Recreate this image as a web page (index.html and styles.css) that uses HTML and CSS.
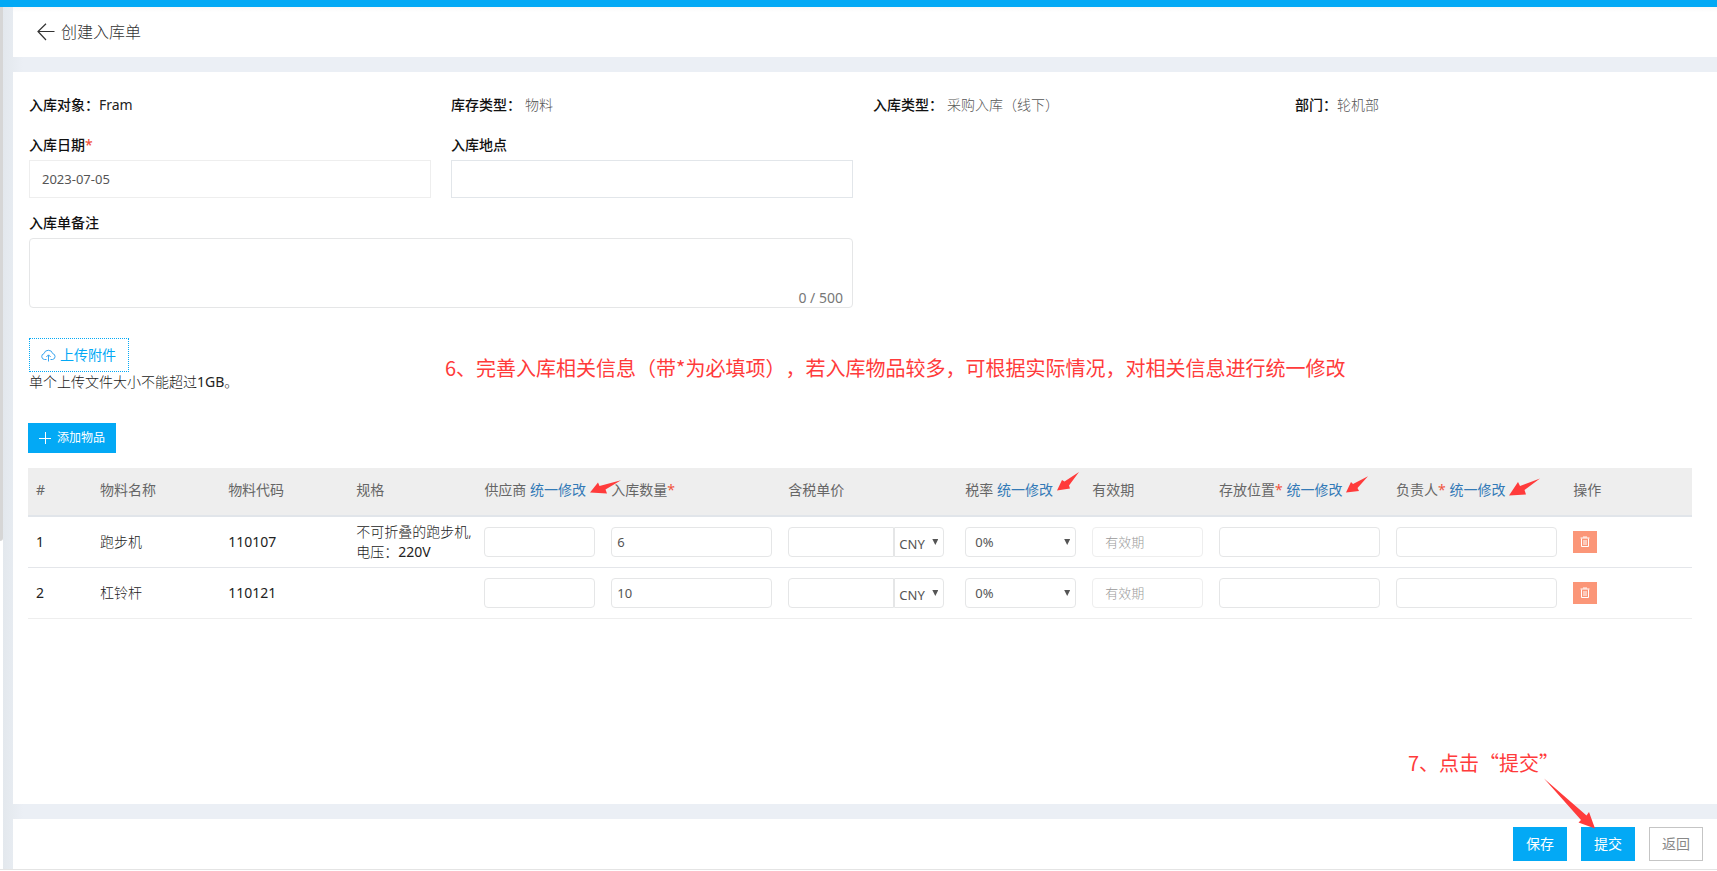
FILE: index.html
```html
<!DOCTYPE html>
<html lang="zh-CN">
<head>
<meta charset="utf-8">
<title>创建入库单</title>
<link rel="stylesheet" href="styles.css">
</head>
<body>
<div class="topbar"></div>
<div class="shell">
  <div class="rail"><div class="rail-thumb"></div></div>
  <main class="page">
    <header class="page-head">
      <a class="back" href="#" aria-label="返回上一页"><svg width="18" height="18" viewBox="0 0 18 18" fill="none" stroke="#333" stroke-width="1.2"><path d="M17.5 8.500H1M9 .8L1 8.500L9 17"/></svg></a>
      <h1 class="page-title">创建入库单</h1>
    </header>

    <section class="card">
      <form class="form">
        <div class="fact"><b>入库对象：</b><span class="latin">Fram</span></div>
        <div class="fact"><b>库存类型：</b><span class="muted spaced">物料</span></div>
        <div class="fact"><b>入库类型：</b><span class="muted spaced">采购入库（线下）</span></div>
        <div class="fact"><b>部门：</b><span class="muted">轮机部</span></div>
        <div class="field first-col">
          <label for="date">入库日期<i class="req">*</i></label>
          <input id="date" class="box pale" type="text" value="2023-07-05">
        </div>
        <div class="field">
          <label for="place">入库地点</label>
          <input id="place" class="box" type="text">
        </div>
        <div class="field remark">
          <label for="remark">入库单备注</label>
          <div class="area-wrap"><textarea id="remark" class="area"></textarea><span class="count">0 / 500</span></div>
        </div>
      </form>

      <div class="upload">
        <button type="button" class="upload-btn"><svg width="15" height="13" viewBox="0 0 15 13" fill="none" stroke="#3aa5ef" stroke-width="1"><path d="M5.500 10.500H3.500A3 3 0 0 1 3 4.600A4.500 4.500 0 0 1 11.700 4.600A3 3 0 0 1 11.500 10.500H9.500M7.500 12.500V6M5.300 8L7.500 5.800L9.700 8"/></svg>上传附件</button>
        <p class="hint">单个上传文件大小不能超过<span class="latin">1GB</span>。</p>
      </div>

      <button type="button" class="add-btn"><svg width="12" height="12" viewBox="0 0 12 12" stroke="#fff" fill="none"><path d="M6.500 0V12M0 6.500H12"/></svg>添加物品</button>

      <table class="items">
        <colgroup><col class="c-no"><col class="c-m"><col class="c-m"><col class="c-m"><col class="c-s"><col class="c-l"><col class="c-l"><col class="c-s"><col class="c-s"><col class="c-l"><col class="c-l"><col class="c-s"></colgroup>
        <thead>
          <tr>
            <th>#</th><th>物料名称</th><th>物料代码</th><th>规格</th>
            <th>供应商 <a class="bulk" href="#">统一修改<svg class="mark m1" width="31" height="15" viewBox="0 0 31 15"><path d="M0 12.500L8 2.500L9.500 6L31 .3L15.500 9.500L17 13.500Z"/></svg></a></th>
            <th>入库数量<i class="req">*</i></th><th>含税单价</th>
            <th>税率 <a class="bulk" href="#">统一修改<svg class="mark m2" width="22" height="19" viewBox="0 0 22 19"><path d="M0 18.500L5 8L7.500 9.500L22 0L12 13.500L13 16.500Z"/></svg></a></th>
            <th>有效期</th>
            <th>存放位置<i class="req">*</i> <a class="bulk" href="#">统一修改<svg class="mark m3" width="22" height="17" viewBox="0 0 22 17"><path d="M0 16.500L5 6L7 8L22 .3L11.500 12L13 15Z"/></svg></a></th>
            <th>负责人<i class="req">*</i> <a class="bulk" href="#">统一修改<svg class="mark m4" width="31" height="18" viewBox="0 0 31 18"><path d="M0 17.500L9 4L11 8L31 .5L15.500 12L17 16.500Z"/></svg></a></th>
            <th>操作</th>
          </tr>
        </thead>
        <tbody>
          <tr>
            <td>1</td><td class="cn">跑步机</td><td>110107</td><td class="cn spec">不可折叠的跑步机,<br>电压：<span class="latin">220V</span></td>
            <td><input class="cell" type="text" aria-label="供应商"></td>
            <td><input class="cell" type="text" aria-label="入库数量" value="6"></td>
            <td><div class="price"><input class="cell" type="text" aria-label="含税单价"><span class="pick cur"><select class="cell" aria-label="币种"><option>CNY</option></select></span></div></td>
            <td><span class="pick"><select class="cell rate" aria-label="税率"><option>0%</option></select></span></td>
            <td><input class="cell valid" type="text" aria-label="有效期" placeholder="有效期"></td>
            <td><input class="cell" type="text" aria-label="存放位置"></td>
            <td><input class="cell" type="text" aria-label="负责人"></td>
            <td><button type="button" class="del" aria-label="删除"><svg width="10" height="12" viewBox="0 0 10 12" fill="none" stroke="#fff"><path d="M.5 2H9.500M3 1H7M1.500 2.500V10.500H8.500V2.500M4 4V9M6 4V9"/></svg></button></td>
          </tr>
          <tr>
            <td>2</td><td class="cn">杠铃杆</td><td>110121</td><td></td>
            <td><input class="cell" type="text" aria-label="供应商"></td>
            <td><input class="cell" type="text" aria-label="入库数量" value="10"></td>
            <td><div class="price"><input class="cell" type="text" aria-label="含税单价"><span class="pick cur"><select class="cell" aria-label="币种"><option>CNY</option></select></span></div></td>
            <td><span class="pick"><select class="cell rate" aria-label="税率"><option>0%</option></select></span></td>
            <td><input class="cell valid" type="text" aria-label="有效期" placeholder="有效期"></td>
            <td><input class="cell" type="text" aria-label="存放位置"></td>
            <td><input class="cell" type="text" aria-label="负责人"></td>
            <td><button type="button" class="del" aria-label="删除"><svg width="10" height="12" viewBox="0 0 10 12" fill="none" stroke="#fff"><path d="M.5 2H9.500M3 1H7M1.500 2.500V10.500H8.500V2.500M4 4V9M6 4V9"/></svg></button></td>
          </tr>
        </tbody>
      </table>
      <p class="note note-six">6、完善入库相关信息（带*为必填项），若入库物品较多，可根据实际情况，对相关信息进行统一修改</p>
    </section>

    <footer class="actions">
      <button type="button" class="btn">保存</button>
      <button type="button" class="btn">提交</button>
      <button type="button" class="btn plain">返回</button>
      <p class="note note-seven">7、点击“提交”</p>
      <svg class="mark m5" width="52" height="51" viewBox="0 0 52 51"><path d="M0 .5L42.500 37.500L45 34L51 50.500L34.500 44.500L37 42Z"/></svg>
    </footer>
  </main>
</div>
</body>
</html>
```
FILE: styles.css
```css
* { box-sizing: border-box; }

body {
  margin: 0;
  min-height: 100vh;
  display: flex;
  flex-direction: column;
  background: #fff;
  color: #222;
  font: 14px/20px "Noto Sans", "Noto Sans CJK SC", sans-serif;
}

h1, p { margin: 0; font-weight: normal; }
a { text-decoration: none; }
svg { display: block; flex: none; }
button, input, select, textarea { font: inherit; color: inherit; margin: 0; }

.topbar { height: 7px; background: #03a9f5; }

.shell { flex: 1; display: flex; border-bottom: 1px solid #e4e4e4; margin-bottom: 1px; }
.rail { width: 3px; background: #fff; }
.rail-thumb { height: 62%; background: #d6d6d6; border-radius: 0 0 3px 0; }

.page {
  flex: 1;
  min-width: 0;
  display: flex;
  flex-direction: column;
  gap: 15px;
  padding-left: 10px;
  background: linear-gradient(90deg, #e3e8ed, #ebeff5 20px);
}

.page-head {
  display: flex;
  align-items: center;
  gap: 6px;
  height: 50px;
  padding: 0 24px;
  background: linear-gradient(#f8f8f8, #fff 5px);
}
.page-title {
  font-size: 16px;
  line-height: 24px;
  font-weight: 300;
  color: #333;
}

.card {
  position: relative;
  flex: 1;
  padding: 23px 20px 20px 15px;
  background: #fff;
}

.form {
  display: grid;
  grid-template-columns: repeat(4, 1fr);
  column-gap: 20px;
  margin-left: 1px;
}
.fact { margin-bottom: 20px; }
.fact b, .field label { font-weight: 500; color: #111; }
.muted, .hint, .cn { font-weight: 300; }
.muted { color: #555; }
.spaced { margin-left: 4px; }
.latin { font-weight: 400; }
.req { font-style: normal; color: #f0553e; }

.field { display: flex; flex-direction: column; gap: 5px; margin-bottom: 15px; }
.first-col { grid-column: 1; }
.remark { grid-column: 1 / span 2; margin-bottom: 30px; }
.box {
  width: 100%;
  height: 38px;
  padding: 0 12px;
  border: 1px solid #e2e6ea;
  background: #fff;
  font-size: 13px;
  color: #555;
}
.pale { border-color: #eee; }

.area-wrap { position: relative; display: flex; }
.area {
  flex: 1;
  height: 70px;
  padding: 8px 12px;
  border: 1px solid #e5e6e7;
  border-radius: 4px;
  resize: none;
}
.count { position: absolute; right: 10px; bottom: 0; color: #777; }

.upload { margin-left: 1px; }
.upload-btn {
  display: flex;
  align-items: center;
  gap: 4px;
  height: 34px;
  padding: 0 12px 0 11px;
  border: 1px dotted #03a9f5;
  background: #fff;
  color: #03a9f5;
}
.hint { margin: 0 0 31px; color: #222; }

.add-btn {
  display: flex;
  align-items: center;
  gap: 6px;
  height: 30px;
  padding: 0 11px;
  border: 0;
  background: #03a9f5;
  color: #fff;
  font-size: 12px;
}

.items {
  width: calc(100% - 5px);
  margin-top: 15px;
  table-layout: fixed;
  border-collapse: separate;
  border-spacing: 0;
}
.c-no { width: 64px; }
.c-m { width: 7.7%; }
.c-l { width: 10.64%; }
.c-s { width: auto; }
.items th {
  height: 49px;
  padding: 0 8px 3px;
  border-bottom: 2px solid #e1e5ea;
  background: #eee;
  color: #666;
  font-weight: 400;
  text-align: left;
  white-space: nowrap;
}
.items td {
  height: 51px;
  padding: 0 8px;
  border-bottom: 1px solid #e4e6ea;
  vertical-align: middle;
}
.items tbody tr:last-child td { border-bottom-color: #eee; }
.spec { white-space: nowrap; }
.bulk { position: relative; color: #337ab7; }

.cell {
  display: block;
  width: 100%;
  height: 30px;
  padding: 0 5px;
  border: 1px solid #e5e6e7;
  border-radius: 4px;
  background: #fff;
  font-size: 13px;
  color: #555;
}
.valid { padding: 0 12px; border-color: #eee; }
.valid::placeholder { color: #999; font-weight: 300; opacity: 1; }

.price { display: flex; margin-right: 5px; }
.price > .cell { flex: 1; min-width: 0; border-radius: 4px 0 0 4px; }
.pick { position: relative; display: block; }
.pick select { appearance: none; }
.pick .rate { padding: 0 9px; }
.pick::after {
  content: "";
  position: absolute;
  right: 6px;
  top: 12px;
  width: 6px;
  height: 6px;
  background: #555;
  clip-path: polygon(0 0, 100% 0, 50% 100%);
}
.cur { width: 50px; }
.cur select { padding: 3px 4px 0; border-radius: 0 4px 4px 0; }

.del {
  display: flex;
  align-items: center;
  justify-content: center;
  width: 24px;
  height: 22px;
  padding: 0;
  border: 0;
  background: #fb9678;
}

.actions {
  position: relative;
  display: flex;
  justify-content: flex-end;
  align-items: center;
  gap: 14px;
  height: 50px;
  padding: 0 14px;
  background: #fff;
}
.btn {
  height: 34px;
  padding: 0 13px;
  border: 0;
  background: #03a9f5;
  color: #fff;
}
.plain { padding: 0 12px; border: 1px solid #c5c5c5; background: #fff; color: #888; }

/* Step annotations laid over the form */
.note {
  position: absolute;
  color: #ff3b3b;
  font: 20px/28px "Noto Sans CJK SC", sans-serif;
  white-space: nowrap;
  text-spacing-trim: space-all;
}
.note-six { left: 432px; top: 282px; }
.note-seven { right: 158px; bottom: 92px; }
.mark { position: absolute; fill: #ff3b3b; }
.m1 { left: calc(100% + 4px); top: 0; z-index: 1; }
.m2 { left: calc(100% + 4px); top: -8px; }
.m3 { left: calc(100% + 4px); top: -4px; }
.m4 { left: calc(100% + 4px); top: -2px; }
.m5 { right: 121px; bottom: 40px; }
```
